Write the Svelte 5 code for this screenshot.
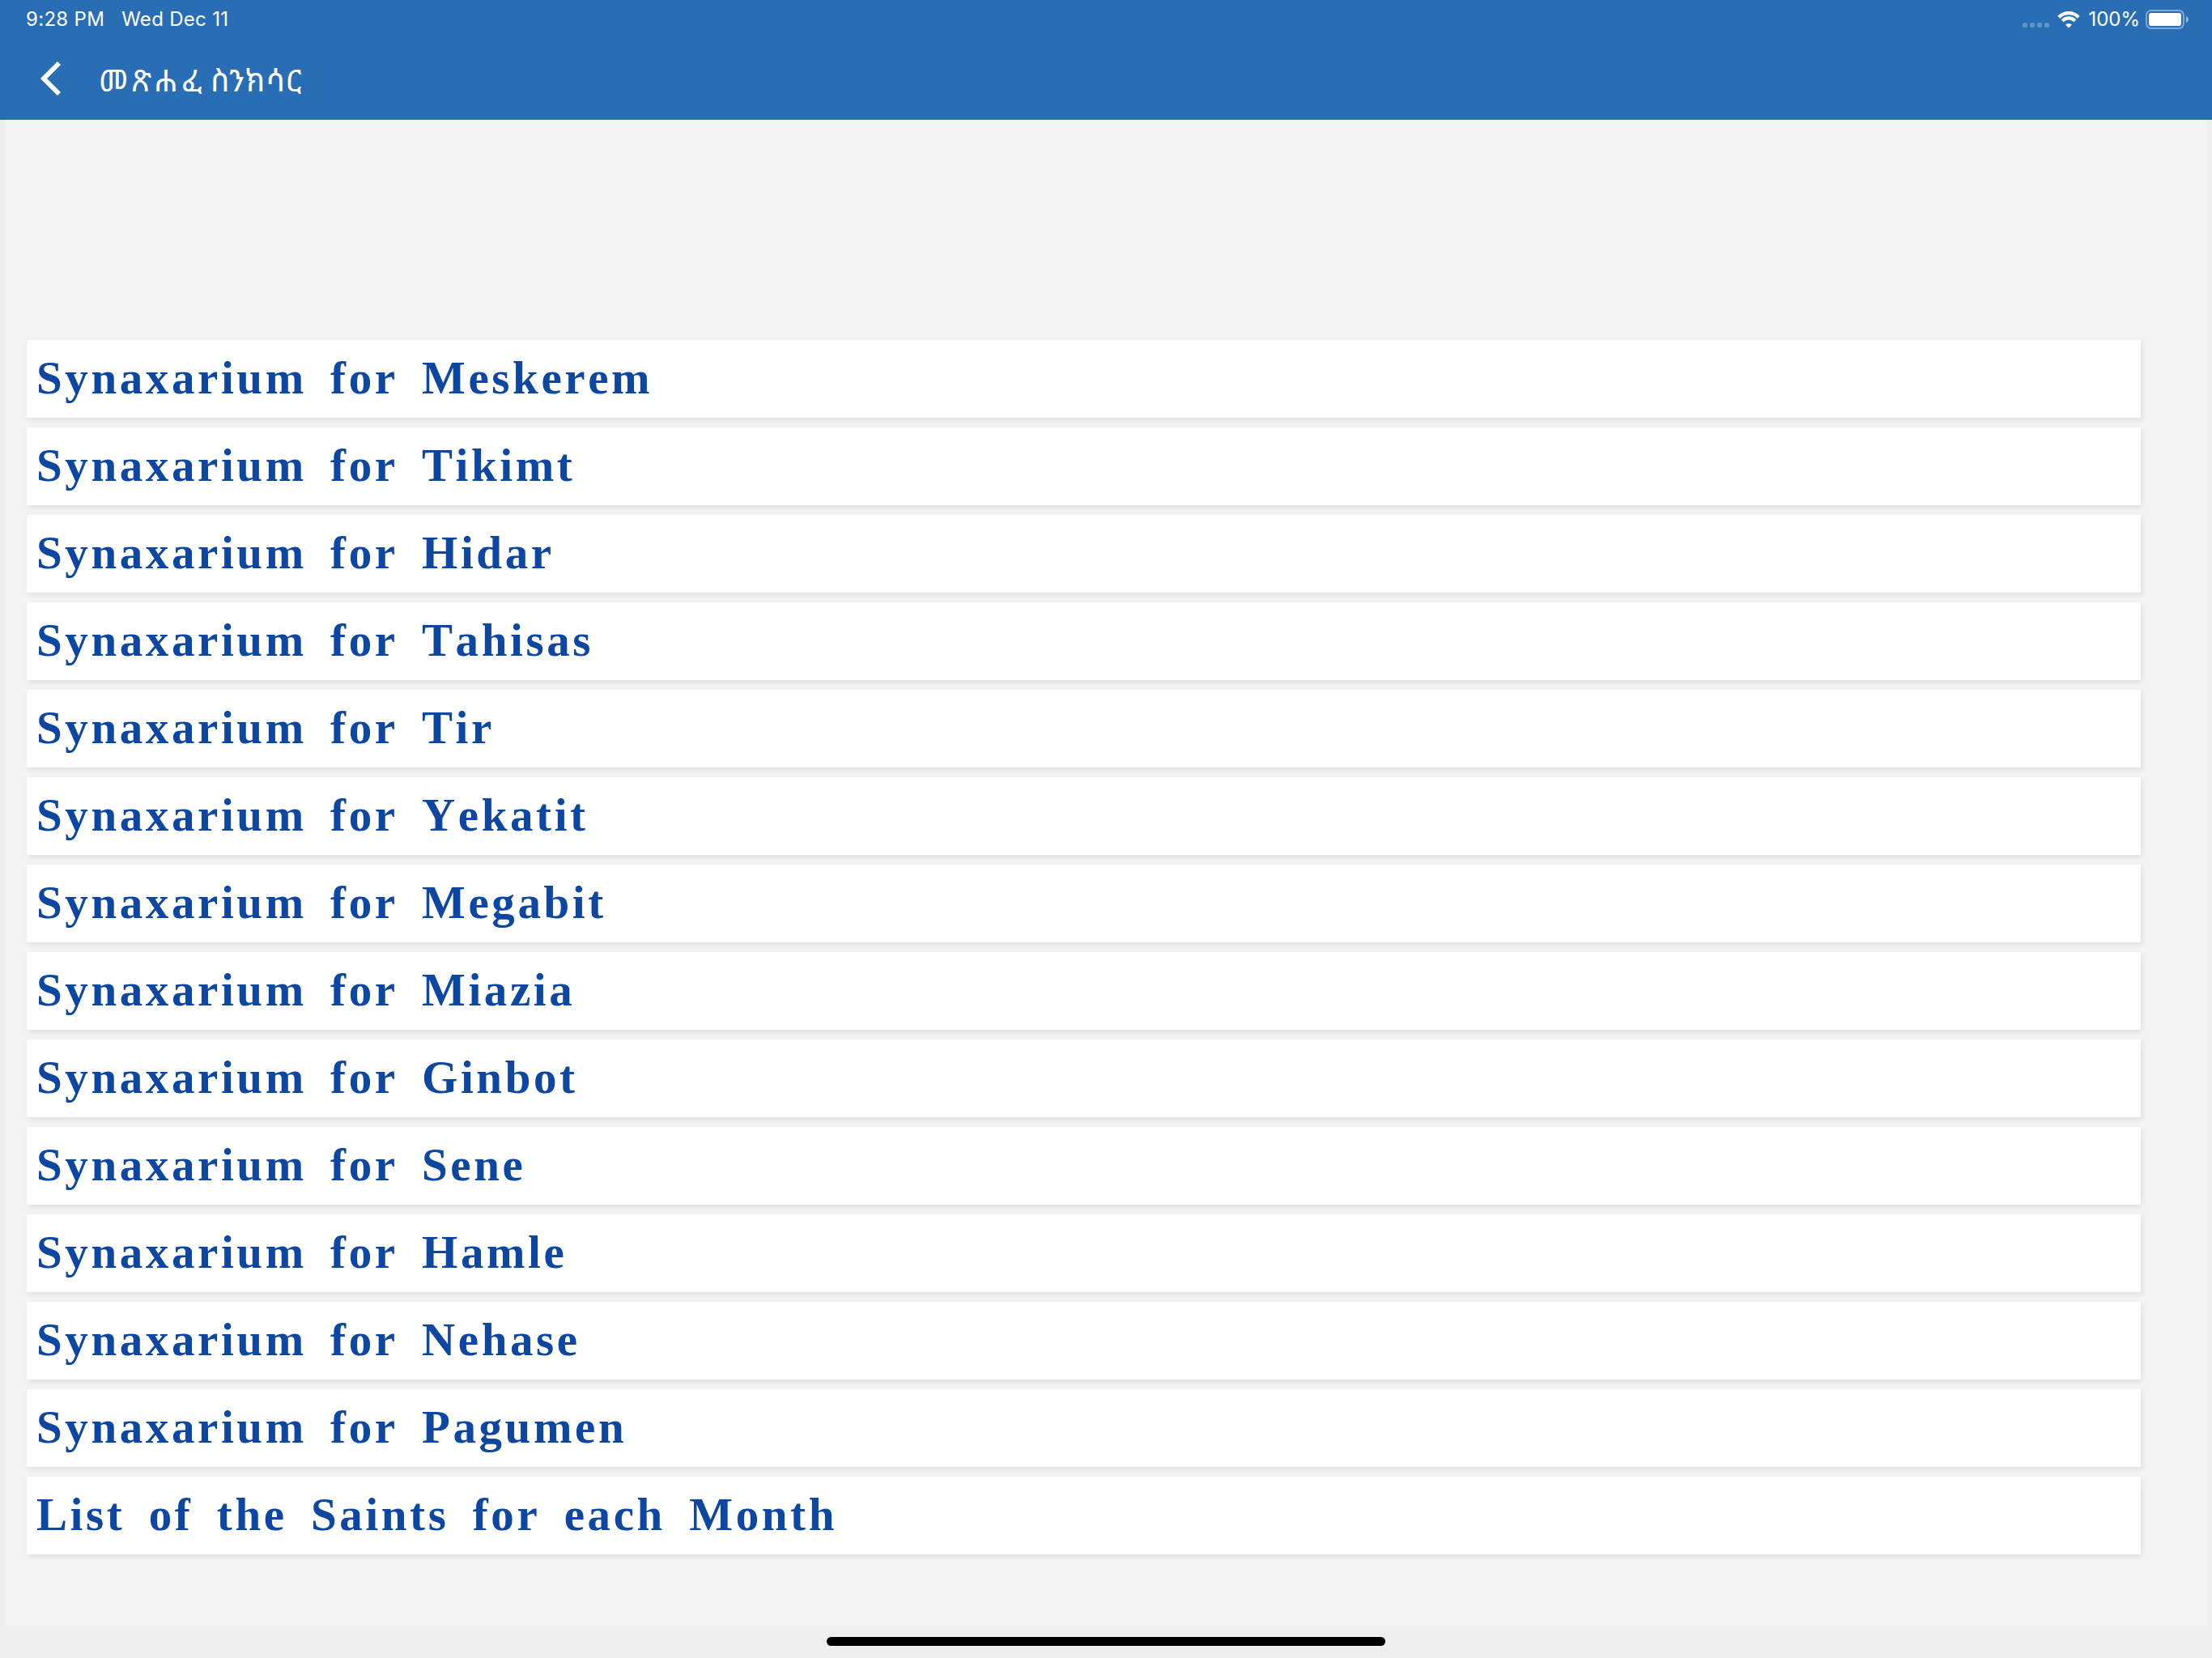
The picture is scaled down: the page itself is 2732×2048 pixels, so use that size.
<script lang="ts">
  const months = [
    'Meskerem',
    'Tikimt',
    'Hidar',
    'Tahisas',
    'Tir',
    'Yekatit',
    'Megabit',
    'Miazia',
    'Ginbot',
    'Sene',
    'Hamle',
    'Nehase',
    'Pagumen'
  ]

  const items = [...months.map((m) => `Synaxarium for ${m}`), 'List of the Saints for each Month']
</script>

<div class="screen">
  <header>
    <div class="status">
      <span class="time">9:28 PM</span>
      <span class="date">Wed Dec 11</span>
      <div class="indicators">
        <svg class="signal" width="33" height="6" viewBox="0 0 33 6">
          {#each [0, 9, 18, 27] as x}
            <rect {x} width="6" height="6" rx="2" />
          {/each}
        </svg>
        <svg class="wifi" width="28" height="21" viewBox="0 0 28 21">
          <path d="M1.8 7.2a17.3 17.3 0 0 1 24.4 0M6.2 11.7a11 11 0 0 1 15.6 0" />
          <path class="dot" d="M14 20.6l-3.9-4a5.5 5.5 0 0 1 7.8 0z" />
        </svg>
        <span class="percent">100%</span>
        <svg class="battery" width="54" height="24" viewBox="0 0 54 24">
          <rect class="shell" x="1" y="1" width="46" height="22" rx="6" />
          <rect class="charge" x="4" y="4" width="40" height="16" rx="3" />
          <path class="cap" d="M50 8c4 1.5 4 6.5 0 8z" />
        </svg>
      </div>
    </div>
    <div class="toolbar">
      <button class="back" aria-label="Back">
        <svg width="26" height="44" viewBox="0 0 26 44">
          <path d="M24 3L5 22L24 41" />
        </svg>
      </button>
      <h1><span class="wide">መጽሐፈ</span> <span>ስንክሳር</span></h1>
    </div>
  </header>

  <main>
    {#each items as item}
      <button class="item">{item}</button>
    {/each}
  </main>

  <footer>
    <div class="home-bar"></div>
  </footer>
</div>

<style>
  :global(body) {
    background: #efefef;
  }

  .screen {
    display: flex;
    flex-direction: column;
    width: 2732px;
    height: 2048px;
    overflow: hidden;
    font-family: Inter, 'Liberation Sans', sans-serif;
  }

  button {
    border: 0;
    padding: 0;
    background: none;
    text-align: left;
  }

  header {
    height: 148px;
    flex: none;
    background: #296eb4;
    color: #fff;
  }

  .status {
    display: flex;
    align-items: center;
    height: 48px;
    padding: 0 28px 0 32px;
    font-size: 24px;
    line-height: 48px;
    white-space: nowrap;
  }

  .time,
  .date {
    letter-spacing: 0.3px;
  }

  .date {
    margin-left: 21px;
  }

  .indicators {
    display: flex;
    align-items: center;
    margin-left: auto;
  }

  .signal {
    margin: 14px 10px 0 0;
    fill: #fff;
    opacity: 0.25;
  }

  .wifi {
    margin-right: 10px;
    fill: none;
    stroke: #fff;
    stroke-width: 4.2;
  }

  .wifi .dot {
    fill: #fff;
    stroke: none;
  }

  .battery {
    margin-left: 7px;
  }

  .shell {
    fill: none;
    stroke: #fff;
    stroke-width: 2;
    opacity: 0.4;
  }

  .charge {
    fill: #fff;
  }

  .cap {
    fill: #fff;
    opacity: 0.5;
  }

  .toolbar {
    display: flex;
    align-items: center;
    height: 98px;
    padding-left: 49px;
  }

  .back {
    display: flex;
    width: 73px;
    color: #fff;
  }

  .back path {
    fill: none;
    stroke: currentColor;
    stroke-width: 5.8;
  }

  h1 {
    margin: 0;
    padding-top: 1px;
    font-family: 'Noto Sans Ethiopic', 'Noto Sans', serif;
    font-size: 38px;
    font-weight: 400;
    line-height: 60px;
    letter-spacing: 1px;
    word-spacing: -6px;
    white-space: nowrap;
  }

  .wide {
    letter-spacing: 5.5px;
  }

  main {
    flex: 1;
    display: flex;
    flex-direction: column;
    gap: 12px;
    margin: 0 6px;
    padding: 272px 82px 0 27px;
    background: #f3f3f3;
  }

  .item {
    height: 96px;
    padding: 0 0 2px 12px;
    background: #fff;
    box-shadow: 2px 3px 6px rgba(0, 0, 0, 0.08);
    color: #0d47a1;
    font-family: 'Liberation Serif', serif;
    font-size: 57px;
    font-weight: 700;
    font-kerning: none;
    line-height: 94px;
    letter-spacing: 3.6px;
    word-spacing: 11.5px;
    white-space: nowrap;
  }

  footer {
    display: flex;
    justify-content: center;
    flex: none;
    height: 26px;
    padding-top: 14px;
  }

  .home-bar {
    width: 690px;
    height: 11px;
    border-radius: 6px;
    background: #000;
  }
</style>
